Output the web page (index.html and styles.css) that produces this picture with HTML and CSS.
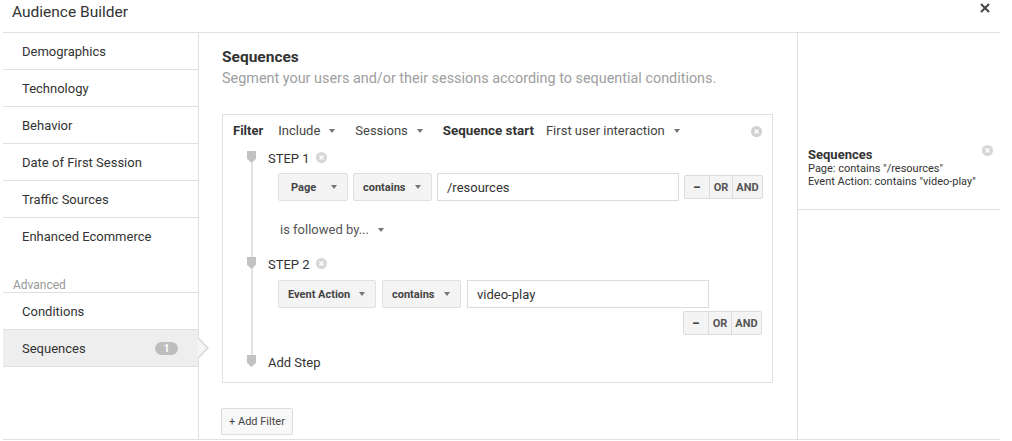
FILE: index.html
```html
<!DOCTYPE html>
<html>
<head>
<meta charset="utf-8">
<link rel="stylesheet" href="styles.css">
</head>
<body>
<div class="modal">
  <div class="header">
    <div class="title">Audience Builder</div>
    <svg class="close-x" width="10" height="10" viewBox="0 0 10 10"><path d="M1 1L9 9M9 1L1 9" stroke="#444" stroke-width="2"/></svg>
  </div>
  <div class="body">
    <div class="sidebar">
      <div class="nav-item">Demographics</div>
      <div class="nav-item">Technology</div>
      <div class="nav-item">Behavior</div>
      <div class="nav-item">Date of First Session</div>
      <div class="nav-item">Traffic Sources</div>
      <div class="nav-item no-border">Enhanced Ecommerce</div>
      <div class="nav-section">Advanced</div>
      <div class="nav-item">Conditions</div>
      <div class="nav-item active">Sequences <span class="badge">1</span></div>
    </div>
    <div class="main">
      <div class="heading">Sequences</div>
      <div class="subtitle">Segment your users and/or their sessions according to sequential conditions.</div>
      <div class="filter-box">
        <div class="filter-row">
          <span class="bold lbl-filter">Filter</span>
          <span class="dd">Include <i class="caret"></i></span>
          <span class="dd">Sessions <i class="caret"></i></span>
          <span class="bold lbl-seq">Sequence start</span>
          <span class="dd">First user interaction <i class="caret"></i></span>
          <svg class="circle-x push" width="11" height="11" viewBox="0 0 11 11"><circle cx="5.5" cy="5.5" r="5.5" fill="#d0d0d0"/><path d="M3.5 3.5L7.5 7.5M7.5 3.5L3.5 7.5" stroke="#fff" stroke-width="1.4"/></svg>
        </div>
        <div class="steps">
          <div class="step-head">
            <span class="marker"></span>
            <span class="step-label">STEP 1</span>
            <svg class="circle-x" width="11" height="11" viewBox="0 0 11 11"><circle cx="5.5" cy="5.5" r="5.5" fill="#d6d6d6"/><path d="M3.5 3.5L7.5 7.5M7.5 3.5L3.5 7.5" stroke="#fff" stroke-width="1.4"/></svg>
          </div>
          <div class="cond-row r1">
            <span class="sel w-page">Page <i class="caret"></i></span>
            <span class="sel w-contains">contains <i class="caret"></i></span>
            <span class="input">/resources</span>
            <div class="btn-group"><span class="bg-btn minus">&minus;</span><span class="bg-btn or">OR</span><span class="bg-btn and">AND</span></div>
          </div>
          <div class="followed">is followed by... <i class="caret"></i></div>
          <div class="step-head s2">
            <span class="marker"></span>
            <span class="step-label">STEP 2</span>
            <svg class="circle-x" width="11" height="11" viewBox="0 0 11 11"><circle cx="5.5" cy="5.5" r="5.5" fill="#d6d6d6"/><path d="M3.5 3.5L7.5 7.5M7.5 3.5L3.5 7.5" stroke="#fff" stroke-width="1.4"/></svg>
          </div>
          <div class="cond-row r2">
            <span class="sel w-event">Event Action <i class="caret"></i></span>
            <span class="sel w-contains">contains <i class="caret"></i></span>
            <span class="input">video-play</span>
          </div>
          <div class="group-row">
            <div class="btn-group"><span class="bg-btn minus">&minus;</span><span class="bg-btn or">OR</span><span class="bg-btn and">AND</span></div>
          </div>
          <div class="step-head add">
            <span class="marker"></span>
            <span class="step-label">Add Step</span>
          </div>
        </div>
      </div>
      <div class="add-filter">+ Add Filter</div>
    </div>
    <div class="summary">
      <div class="summary-card">
        <div class="summary-top">
          <span class="summary-title">Sequences</span>
          <svg class="circle-x" width="11" height="11" viewBox="0 0 11 11"><circle cx="5.5" cy="5.5" r="5.5" fill="#d6d6d6"/><path d="M3.5 3.5L7.5 7.5M7.5 3.5L3.5 7.5" stroke="#fff" stroke-width="1.4"/></svg>
        </div>
        <div class="summary-line">Page: contains "/resources"</div>
        <div class="summary-line">Event Action: contains "video-play"</div>
      </div>
    </div>
  </div>
</div>
</body>
</html>
```

FILE: styles.css
```css
* { box-sizing: border-box; }
html, body { margin: 0; padding: 0; background: #fff; }
body {
  font-family: Roboto, "Liberation Sans", sans-serif;
  color: #333;
  font-size: 13px;
}
.modal {
  margin-left: 3px;
  width: 997px;
}
.header {
  height: 33px;
  border-bottom: 1px solid #e0e0e0;
  display: flex;
  justify-content: space-between;
  align-items: flex-start;
  padding: 3px 8px 0 9px;
}
.title {
  font-size: 15.5px;
  line-height: 18px;
  color: #333;
}
.close-x { margin-top: 0; margin-right: 2px; }

.body {
  display: flex;
  height: 407px;
  border-bottom: 1px solid #e0e0e0;
}
.sidebar {
  width: 196px;
  border-right: 1px solid #e0e0e0;
  flex: none;
}
.nav-item {
  position: relative;
  height: 37px;
  border-bottom: 1px solid #e0e0e0;
  display: flex;
  align-items: center;
  justify-content: space-between;
  padding: 0 20px 0 19px;
  font-size: 13px;
  color: #333;
}
.nav-item.no-border { border-bottom-color: transparent; }
.nav-section {
  height: 38px;
  border-bottom: 1px solid #e0e0e0;
  display: flex;
  align-items: flex-end;
  padding: 0 0 0 10px;
  font-size: 12px;
  color: #999;
}
.nav-item.active { background: #eee; }
.nav-item.active::before,
.nav-item.active::after {
  content: "";
  position: absolute;
  top: 8px;
  width: 0;
  height: 0;
  border-top: 10px solid transparent;
  border-bottom: 10px solid transparent;
}
.nav-item.active::before {
  right: -11px;
  border-left: 10px solid #d6d6d6;
}
.nav-item.active::after {
  right: -9px;
  top: 9px;
  border-top-width: 9px;
  border-bottom-width: 9px;
  border-left: 9px solid #f4f4f4;
}
.badge {
  display: inline-flex;
  align-items: center;
  justify-content: center;
  width: 23px;
  height: 13px;
  border-radius: 7px;
  background: #bdbdbd;
  color: #fff;
  font-size: 10px;
  font-weight: 700;
}

.main {
  width: 599px;
  flex: none;
  border-right: 1px solid #e0e0e0;
  padding: 15px 0 0 23px;
}
.heading {
  font-size: 15.5px;
  font-weight: 700;
  line-height: 18px;
  color: #333;
}
.subtitle {
  font-size: 14.4px;
  line-height: 17px;
  color: #9e9e9e;
  margin-top: 4px;
}
.filter-box {
  margin-top: 27px;
  width: 551px;
  height: 269px;
  border: 1px solid #e0e0e0;
  padding: 7px 9px 0 10px;
}
.bold { font-weight: 700; }
.filter-row {
  display: flex;
  align-items: center;
  height: 18px;
  line-height: 18px;
  color: #333;
}
.lbl-filter { margin-right: 15px; }
.lbl-seq { margin-right: 12px; font-size: 13.4px; }
.dd {
  display: inline-flex;
  align-items: center;
  gap: 9px;
  margin-right: 20px;
  color: #444;
}
.caret {
  display: inline-block;
  width: 0;
  height: 0;
  border-left: 3.5px solid transparent;
  border-right: 3.5px solid transparent;
  border-top: 4px solid #757575;
}
.push { margin-left: auto; margin-right: 1px; }

.steps {
  position: relative;
  margin: 10px 0 0 14px;
}
.steps::before {
  content: "";
  position: absolute;
  left: 4px;
  top: 8px;
  bottom: 10px;
  width: 2px;
  background: #e3e3e3;
}
.step-head {
  position: relative;
  display: flex;
  align-items: flex-start;
  height: 16px;
}
.marker {
  width: 9px;
  height: 12px;
  background: #c2c2c2;
  clip-path: polygon(0 0, 100% 0, 100% 65%, 50% 100%, 0 65%);
  margin-right: 12px;
  margin-top: 1px;
}
.step-label {
  line-height: 16px;
  font-size: 13px;
  color: #333;
  margin-right: 6px;
  margin-top: 1px;
}
.step-head .circle-x { margin-top: 2px; }
.step-head.s2 { margin-top: 18px; }
.step-head.add { margin-top: 19px; }

.cond-row {
  display: flex;
  align-items: center;
  margin-left: 31px;
  height: 28px;
}
.cond-row.r1 { margin-top: 7px; gap: 5px; }
.cond-row.r2 { margin-top: 8px; gap: 6px; }
.sel {
  flex: none;
  display: inline-flex;
  align-items: center;
  justify-content: space-between;
  height: 28px;
  padding: 0 10px 0 9px;
  background: #f4f4f4;
  border: 1px solid #e0e0e0;
  border-radius: 2px;
  font-size: 11px;
  font-weight: 700;
  color: #444;
}
.w-page { width: 70px; padding-left: 12px; }
.w-contains { width: 79px; }
.w-event { width: 98px; }
.input {
  flex: none;
  display: flex;
  align-items: center;
  width: 242px;
  height: 28px;
  border: 1px solid #dcdcdc;
  padding-left: 9px;
  font-size: 13px;
  color: #333;
}
.btn-group {
  flex: none;
  display: flex;
  height: 24px;
  border: 1px solid #dcdcdc;
  background: #f4f4f4;
  border-radius: 2px;
}
.bg-btn {
  display: flex;
  align-items: center;
  justify-content: center;
  font-size: 11px;
  font-weight: 700;
  color: #555;
  border-left: 1px solid #dcdcdc;
}
.bg-btn:first-child { border-left: 0; }
.bg-btn.minus { width: 24px; font-size: 14px; color: #444; }
.bg-btn.or { width: 23px; }
.bg-btn.and { width: 30px; }
.group-row {
  display: flex;
  justify-content: flex-end;
  margin-top: 3px;
  width: 515px;
}
.followed {
  margin: 21px 0 0 33px;
  line-height: 16px;
  height: 16px;
  color: #555;
  display: flex;
  align-items: center;
  gap: 9px;
}

.add-filter {
  display: inline-flex;
  align-items: center;
  margin: 25px 0 0 -1px;
  height: 27px;
  padding: 0 7px;
  border: 1px solid #dcdcdc;
  border-radius: 2px;
  background: #f8f8f8;
  font-size: 11px;
  color: #444;
}

.summary {
  width: 202px;
  flex: none;
}
.summary-card {
  margin-top: 112px;
  padding: 0 7px 21px 10px;
  border-bottom: 1px solid #e0e0e0;
}
.summary-top {
  display: flex;
  justify-content: space-between;
  align-items: flex-start;
}
.summary-title {
  font-size: 13px;
  font-weight: 700;
  line-height: 15px;
  color: #333;
  margin-top: 2px;
}
.summary-line {
  font-size: 11px;
  line-height: 13px;
  color: #333;
}
```
